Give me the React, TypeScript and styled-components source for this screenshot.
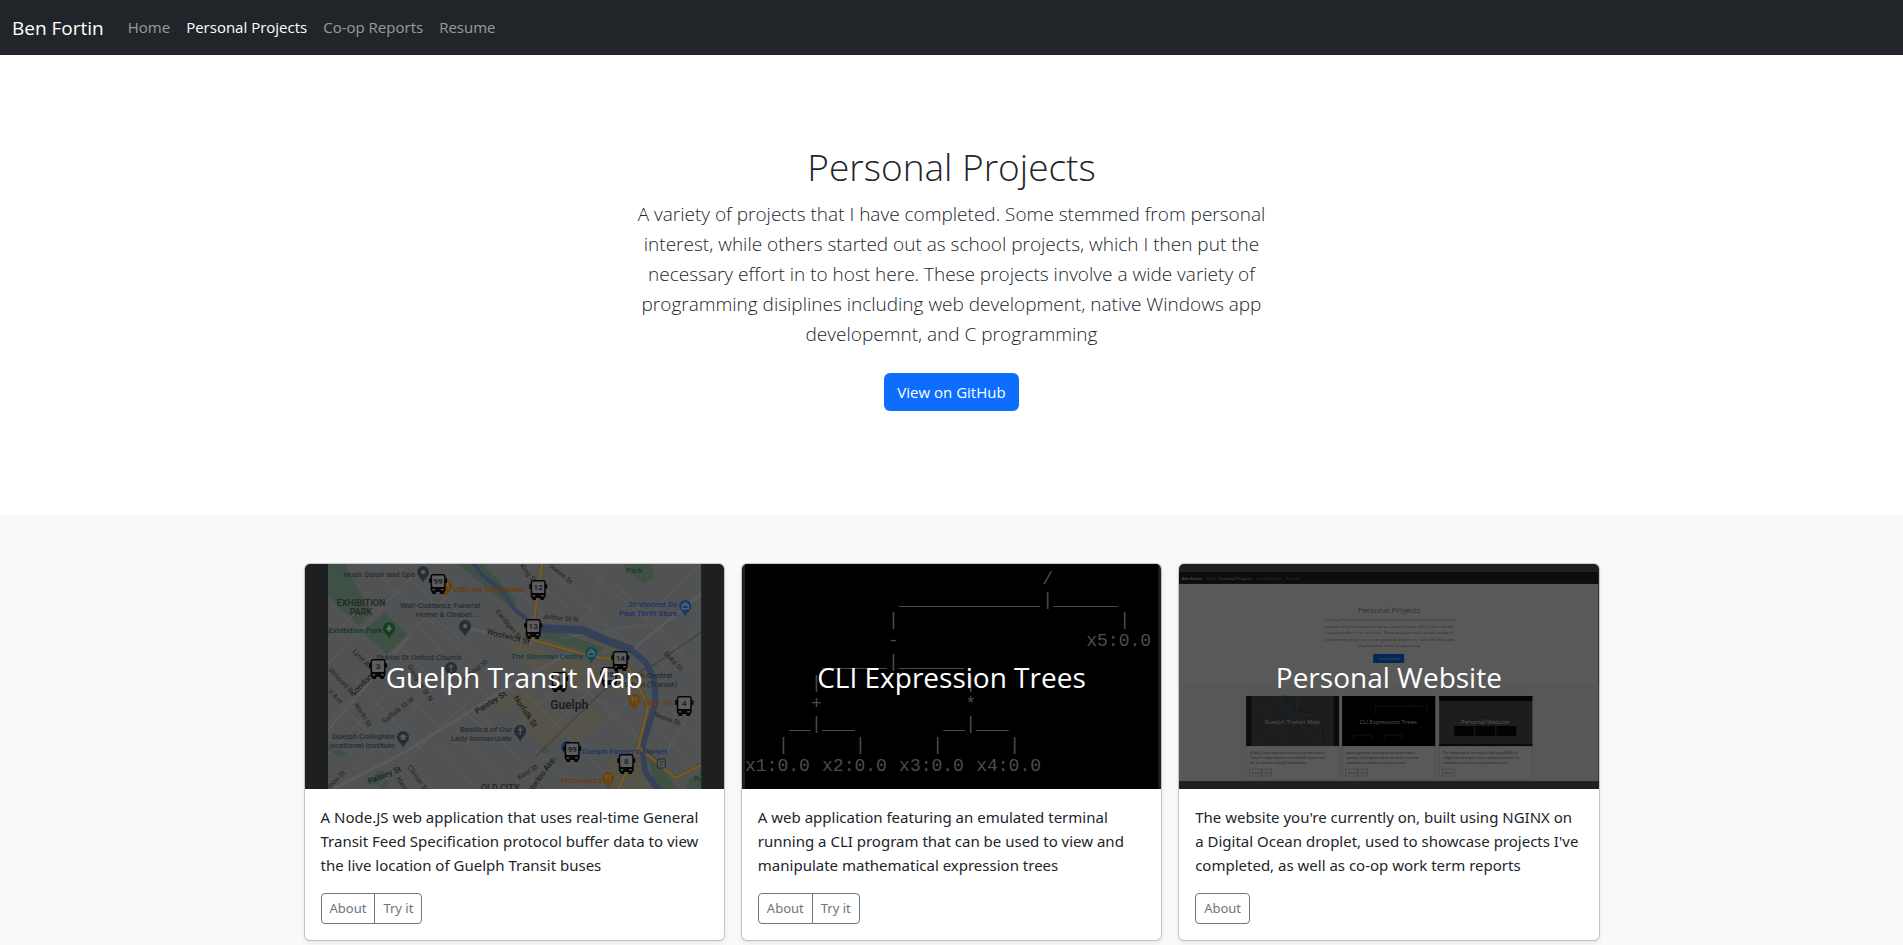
import React from "react";
import styled, { createGlobalStyle } from "styled-components";

const sans = `"Open Sans", "Noto Sans", "Liberation Sans", sans-serif`;

const GlobalStyle = createGlobalStyle`
  *, *::before, *::after { box-sizing: border-box; }
  body {
    margin: 0;
    background: #fff;
    color: #212529;
    font-family: ${sans};
    font-size: 15px;
    line-height: 24px;
  }
`;

const Navbar = styled.nav`
  display: flex;
  flex-wrap: wrap;
  align-items: center;
  padding: 8px 12px;
  background: #212529;
`;

const Brand = styled.a`
  margin-right: 16px;
  color: #fff;
  font-size: 19px;
  line-height: 30px;
  text-decoration: none;
`;

const NavList = styled.ul`
  display: flex;
  flex-wrap: wrap;
  margin: 0;
  padding: 0;
  list-style: none;
`;

const NavLink = styled.a<{ $active?: boolean }>`
  display: block;
  padding: 8px;
  line-height: 23px;
  color: ${(p) => (p.$active ? "#fff" : "rgba(255, 255, 255, 0.55)")};
  text-decoration: none;
`;

const Hero = styled.section`
  padding: 88px 12px 96px;
  text-align: center;
`;

const HeroInner = styled.div`
  max-width: 636px;
  margin: 0 auto;
`;

const HeroTitle = styled.h1`
  margin: 0 0 8px;
  font-size: 37px;
  font-weight: 300;
  line-height: 48px;
`;

const Lead = styled.p`
  margin: 0 0 24px;
  font-size: 19px;
  font-weight: 300;
  line-height: 30px;
`;

const PrimaryLink = styled.a`
  display: inline-block;
  margin-bottom: 8px;
  padding: 7px 13px;
  border-radius: 6px;
  background: #0d6efd;
  color: #fff;
  vertical-align: top;
  text-decoration: none;
`;

const Album = styled.section`
  padding: 48px 0;
  background: #f8f9fa;
`;

const CardGrid = styled.div`
  display: grid;
  grid-template-columns: repeat(3, minmax(0, 1fr));
  gap: 16px;
  max-width: 1320px;
  margin: 0 auto;
  padding: 0 12px;

  @media (max-width: 767px) {
    grid-template-columns: minmax(0, 1fr);
  }
`;

const Card = styled.article`
  display: flex;
  flex-direction: column;
  overflow: hidden;
  border: 1px solid rgba(0, 0, 0, 0.175);
  border-radius: 6px;
  background: #fff;
  background-clip: padding-box;
  box-shadow: 0 2px 4px rgba(0, 0, 0, 0.075);
`;

const Cover = styled.div`
  display: grid;
  place-items: center;
  height: 225px;
  background: #1d1f21;

  > * {
    grid-area: 1 / 1;
  }
`;

const CoverArt = styled.svg`
  display: block;
  width: 100%;
  height: 225px;
`;

const CoverTitle = styled.h2`
  z-index: 1;
  margin: 0;
  color: #fff;
  font-size: 28px;
  font-weight: 400;
  line-height: 36px;
`;

const CardBody = styled.div`
  padding: 16px;
`;

const CardText = styled.p`
  margin: 0 0 16px;
  font-family: "Noto Sans", ${sans};
`;

const ButtonGroup = styled.div`
  display: inline-flex;
  vertical-align: top;
`;

const OutlineButton = styled.button`
  padding: 4px 8px;
  border: 1px solid #6c757d;
  background: transparent;
  color: #6c757d;
  font-family: "Noto Sans", ${sans};
  font-size: 13px;
  line-height: 21px;
  cursor: pointer;

  &:first-child {
    border-radius: 4px 0 0 4px;
  }
  &:last-child {
    border-radius: 0 4px 4px 0;
  }
  &:only-child {
    border-radius: 4px;
  }
  & + & {
    margin-left: -1px;
  }
`;

/* ---------- Guelph Transit Map cover ---------- */

const Bus = ({ x, y, n }: { x: number; y: number; n: string }) => (
  <g transform={`translate(${x} ${y})`}>
    <rect x="-9" y="-5" width="2" height="5" rx="1" fill="#060606" />
    <rect x="7" y="-5" width="2" height="5" rx="1" fill="#060606" />
    <rect x="-6" y="7" width="4" height="4" rx="1" fill="#060606" />
    <rect x="2" y="7" width="4" height="4" rx="1" fill="#060606" />
    <rect x="-7.5" y="-9" width="15" height="18" rx="2.5" fill="#060606" />
    <rect x="-6" y="-7.5" width="12" height="11.5" rx="1" fill="#5c5d5e" />
    <rect x="-5.5" y="6" width="2.5" height="1.5" fill="#545556" />
    <rect x="3" y="6" width="2.5" height="1.5" fill="#545556" />
    <text x="0" y="1" fontSize="8" fontWeight="600" textAnchor="middle" fill="#1a1a1a">
      {n}
    </text>
  </g>
);

const Pin = ({ x, y, fill, kind }: { x: number; y: number; fill: string; kind: string }) => (
  <g transform={`translate(${x} ${y})`}>
    <path d="M0 11C-1 6-6 5-6 0A6 6 0 0 1 6 0C6 5 1 6 0 11Z" fill={fill} />
    {kind === "dot" && <circle r="2.2" fill="#585a5c" />}
    {kind === "cross" && <path d="M0-4V4M-2.5-1.5H2.5" stroke="#5a5c5e" strokeWidth="1.3" />}
    {kind === "tree" && <path d="M0-4L3 2H.7V4H-.7V2H-3Z" fill="#5c6a5e" />}
    {kind === "fork" && (
      <path d="M-1.8-3.5V3.5M-3-3.5V-1H-.6V-3.5M2-3.5V3.5M2-3.5C.6-2 .8 0 2 .5" stroke="#6b5a45" strokeWidth="1" fill="none" />
    )}
    {kind === "shop" && (
      <path d="M-3-.8H3V3H-3ZM-1.6-.8C-1.6-4 1.6-4 1.6-.8" fill="none" stroke="#5d6a78" strokeWidth="1.2" />
    )}
    {kind === "school" && <path d="M-4-.8L0-2.8 4-.8 0 1.2ZM-2.4.8V2.6H2.4V.8" fill="#5a5c5e" />}
  </g>
);

type Label = [text: string, x: number, y: number, fill: string, anchor?: "start" | "middle" | "end", size?: number, rotate?: number, weight?: number];

const slate = "#272d31";
const street = "#2a2b2c";
const orange = "#6e3910";
const blue = "#1a3566";

const mapLabels: Label[] = [
  ["Hush Salon and Spa", 110, 13, slate, "end"],
  ["EXHIBITION", 56, 42, "#24292a", "middle", 9, 0, 600],
  ["PARK", 56, 51, "#24292a", "middle", 9, 0, 600],
  ["Wall-Custance Funeral", 175, 44, slate, "end"],
  ["Home & Chapel:...", 175, 53, slate, "end"],
  ["Exhibition Park", 77, 69, "#10371f", "end"],
  ["Dublin St United Church", 114, 96, slate, "middle"],
  ["Guelph Collegiate", 90, 175, slate, "end"],
  ["ocational Institute", 90, 184, slate, "end"],
  ["With the Grain Baker", 148, 28, orange, "start"],
  ["Basilica of Our", 207, 168, slate, "end"],
  ["Lady Immaculate", 207, 177, slate, "end"],
  ["OLD CITY", 195, 227, "#242628", "middle", 9, 0, 600],
  ["Park", 329, 9, "#1d3a27", "middle"],
  ["St-Vincent De", 372, 43, blue, "end"],
  ["Paul Thrift Store", 372, 52, blue, "end"],
  ["The Sleeman Centre", 278, 95, "#0d3e43", "end"],
  ["Guelph Central", 367, 114, slate, "end"],
  ["Station (Transit)", 372, 123, slate, "end"],
  ["Guelph", 264, 145, "#1b1c1d", "middle", 12, 0, 600],
  ["Sugo on Surrey", 337, 141, orange, "start"],
  ["Guelph Farmers' Market", 362, 190, blue, "end"],
  ["McDonald's", 297, 219, orange, "end"],
  ["Lyon Ave", 47, 88, street, "start", 7, 45],
  ["London Rd", 49, 132, "#1e1f20", "start", 8, -45],
  ["stmount Rd", 23, 106, street, "start", 7, 47],
  ["n Ave", 23, 128, street, "start", 7, 45],
  ["North St", 49, 141, street, "start", 7, 58],
  ["Suffolk St W", 79, 160, street, "start", 7, -38],
  ["Glasgow St N", 102, 102, street, "start", 7, 58],
  ["Cardigan St", 190, 48, street, "start", 7, 50],
  ["Woolwich St", 181, 70, "#1e1f20", "start", 8, 14],
  ["Cardinal St", 156, 120, street, "start", 7, -38],
  ["Paisley St", 172, 150, "#1e1f20", "start", 8, -32],
  ["Paisley St", 64, 220, "#1e1f20", "start", 8, -22],
  ["Clinton St", 102, 203, street, "start", 7, 55],
  ["Harris St", 91, 215, street, "start", 7, 55],
  ["mon St", 25, 225, street, "start", 7, -45],
  ["Norfolk St", 208, 134, "#1e1f20", "start", 8, 56],
  ["Waterloo Ave", 222, 235, "#1e1f20", "start", 8, -54],
  ["Kent St", 214, 216, street, "start", 7, -32],
  ["King St", 214, 2, street, "start", 7, 50],
  ["Queen St", 243, 2, street, "start", 7, 40],
  ["Arthur St N", 238, 55, street, "start", 7, 5],
  ["Duke St", 358, 90, street, "start", 7, 46],
  ["Neeve St", 348, 152, street, "start", 7, 20],
  ["Ro", 389, 217, "#1d3a27", "start"],
];

const minorStreets = [
  "M23 160L103 71L160 14",
  "M28 130L90 200M45 110L120 190M62 92L150 180M92 80L178 165M112 62L190 140M140 62L210 130",
  "M23 190L120 92M50 205L162 90M70 225L190 112",
  "M23 60L60 100M23 100L90 30L120 0M120 0L162 64L210 76",
  "M62 0L150 80M90 0L130 40M23 75L50 50",
  "M100 200L130 225M130 180L172 225M150 165L205 225M175 150L230 215",
  "M210 119L290 200L320 225M215 160L260 115L300 140L350 190",
  "M262 105L310 155M250 160L300 110M285 175L330 130M230 185L275 225",
  "M240 0L300 60L340 95M300 0L280 60M275 0L340 55L396 0M340 55L396 110M310 20L380 90",
  "M396 60L350 110M350 95L396 150M360 140L396 180M350 160L396 215M396 130L360 190",
  "M210 0L265 45M210 25L250 60M255 75L340 60M300 60V90",
];

const TransitMapArt = () => (
  <CoverArt viewBox="0 0 419 225" preserveAspectRatio="xMidYMid slice" aria-hidden="true" fontFamily="Roboto, sans-serif">
    <defs>
      <clipPath id="mapClip">
        <rect x="23" y="0" width="373" height="225" />
      </clipPath>
    </defs>
    <g clipPath="url(#mapClip)">
      <rect x="23" y="0" width="373" height="225" fill="#515253" />
      <g fill="#565349">
        <path d="M196 68L214 64L228 84L262 94L300 102L325 110L322 130L290 122L268 128L240 110L212 96Z" />
        <path d="M204 130L224 124L244 148L272 158L262 172L238 182L218 160Z" />
        <path d="M190 132L206 128L212 140L194 150Z" />
        <path d="M262 158L284 140L300 156L268 180Z" />
        <path d="M302 196L330 190L348 225H312Z" />
        <path d="M286 70L312 80L316 92L292 88Z" />
      </g>
      <g fill="#3f5044">
        <path d="M23 0H40L48 16L66 48L54 62L23 32Z" />
        <path d="M57 68L80 49L103 71L82 90Z" />
        <path d="M154 0H178L210 34V48L165 10Z" />
        <path d="M318 0H345L349 14L339 20L322 8Z" />
        <path d="M68 212L74 206L84 219L78 225L64 218Z" />
        <path d="M232 60L270 74L300 84L290 90L236 74Z" />
        <path d="M340 180L352 196L372 225H350Z" />
        <path d="M23 180L42 190L36 193L23 186Z" />
        <path d="M384 215L396 206V225H380Z" />
        <path d="M238 200L250 192L252 198L240 208Z" />
        <path d="M235 186L240 181L244 187L239 190Z" />
      </g>
      <g fill="none" stroke="#5a5b5d">
        {minorStreets.map((d) => (
          <path key={d} d={d} />
        ))}
        <path d="M28 225L100 188L210 119L262 90" strokeWidth="3" />
        <path d="M23 166L103 74" strokeWidth="2.5" />
        <path d="M162 64L227 80M396 30L340 75L300 110" strokeWidth="3" />
      </g>
      <path d="M230 193L300 125L350 100L396 68" fill="none" stroke="#3d4040" strokeWidth="1" />
      <g fill="none" stroke="#344158" strokeLinejoin="round">
        <path d="M167-2L178 12L196 26L210 46L233 64" strokeWidth="4" />
        <path d="M232 64L277 66L300 76L327 86" strokeWidth="8" />
        <path d="M325 85L340 98L349 115L350 140L343 163L337 183L340 208L354 227" strokeWidth="6" />
      </g>
      <g fill="none" strokeLinejoin="round">
        <g stroke="#5a4a2a" strokeWidth="4">
          <path d="M237 0L230 46L227 76L290 93L320 97L343 142L333 183L313 225" />
          <path d="M333 183L370 214L396 201" />
        </g>
        <g stroke="#6e5b30" strokeWidth="2.5">
          <path d="M237 0L230 46L227 76L290 93L320 97L343 142L333 183L313 225" />
          <path d="M333 183L370 214L396 201" />
        </g>
      </g>
      <rect x="352" y="195" width="8" height="9" rx="2" fill="#555" stroke="#292929" />
      <text x="356" y="202" fontSize="7" textAnchor="middle" fill="#222">
        7
      </text>
      {mapLabels.map(([text, x, y, fill, anchor, size = 8, rotate = 0, weight = 500], i) => (
        <text
          key={i}
          x={x}
          y={y}
          fill={fill}
          fontSize={size}
          fontWeight={weight}
          textAnchor={anchor}
          transform={rotate ? `rotate(${rotate} ${x} ${y})` : undefined}
        >
          {text}
        </text>
      ))}
      <Pin x={118} y={8} fill="#262e33" kind="dot" />
      <Pin x={141} y={22} fill="#6b4208" kind="fork" />
      <Pin x={160} y={62} fill="#262e33" kind="dot" />
      <Pin x={84} y={64} fill="#12401f" kind="tree" />
      <Pin x={146} y={104} fill="#262e33" kind="cross" />
      <Pin x={98} y={173} fill="#262e33" kind="school" />
      <Pin x={380} y={42} fill="#1b3768" kind="shop" />
      <Pin x={286} y={89} fill="#0e4a50" kind="shop" />
      <Pin x={329} y={136} fill="#6b4208" kind="fork" />
      <Pin x={215} y={167} fill="#262e33" kind="cross" />
      <Pin x={303} y={214} fill="#6b4208" kind="fork" />
      <Pin x={262} y={183} fill="#1b3768" kind="shop" />
      <Bus x={133} y={19} n="99" />
      <Bus x={233} y={25} n="12" />
      <Bus x={228} y={64} n="13" />
      <Bus x={73} y={104} n="3" />
      <Bus x={304} y={112} n="20" />
      <Bus x={315} y={96} n="14" />
      <Bus x={254} y={117} n="1" />
      <Bus x={379} y={141} n="4" />
      <Bus x={267} y={187} n="99" />
      <Bus x={321} y={199} n="8" />
    </g>
  </CoverArt>
);

/* ---------- CLI Expression Trees cover ---------- */

type Token = [row: number, col: number, text: string];

const treeTokens: Token[] = [
  [0, 27, "/"],
  [1, 14, "_____________"],
  [1, 27, "|"],
  [1, 28, "______"],
  [2, 13, "|"],
  [2, 34, "|"],
  [3, 13, "-"],
  [3, 31, "x5:0.0"],
  [4, 7, "______"],
  [4, 13, "|"],
  [4, 14, "______"],
  [5, 6, "|"],
  [5, 20, "|"],
  [6, 6, "+"],
  [6, 20, "*"],
  [7, 4, "__"],
  [7, 6, "|"],
  [7, 7, "___"],
  [7, 18, "__"],
  [7, 20, "|"],
  [7, 21, "___"],
  [8, 3, "|"],
  [8, 10, "|"],
  [8, 17, "|"],
  [8, 24, "|"],
  [9, 0, "x1:0.0"],
  [9, 7, "x2:0.0"],
  [9, 14, "x3:0.0"],
  [9, 21, "x4:0.0"],
];

const ExpressionTreeArt = () => (
  <CoverArt viewBox="0 0 419 225" preserveAspectRatio="xMidYMid slice" aria-hidden="true">
    <rect x="3" y="0" width="413" height="225" fill="#000" />
    <g fill="#4c4c4c" fontFamily='"Liberation Mono", monospace' fontSize="18">
      {treeTokens.map(([row, col, text]) => (
        <text key={`${row}-${col}`} x={3 + col * 11} y={20 + row * 20.75}>
          {text}
        </text>
      ))}
    </g>
  </CoverArt>
);

/* ---------- Personal Website cover ---------- */

const leadLines = [
  "A variety of projects that I have completed. Some stemmed from personal",
  "interest, while others started out as school projects, which I then put the",
  "necessary effort in to host here. These projects involve a wide variety of",
  "programming disiplines including web development, native Windows app",
  "developemnt, and C programming",
];

const miniCards = [
  {
    x: 67,
    title: "Guelph Transit Map",
    fill: "#1c1d1e",
    lines: ["A Node.JS web application that uses real-time General", "Transit Feed Specification protocol buffer data to view", "the live location of Guelph Transit buses"],
    buttons: ["About", "Try it"],
  },
  {
    x: 163,
    title: "CLI Expression Trees",
    fill: "#000",
    lines: ["A web application featuring an emulated terminal", "running a CLI program that can be used to view and", "manipulate mathematical expression trees"],
    buttons: ["About", "Try it"],
  },
  {
    x: 260,
    title: "Personal Website",
    fill: "#1d1d1d",
    lines: ["The website you're currently on, built using NGINX on", "a Digital Ocean droplet, used to showcase projects I've", "completed, as well as co-op work term reports"],
    buttons: ["About"],
  },
];

const WebsiteArt = () => (
  <CoverArt viewBox="0 0 419 225" preserveAspectRatio="xMidYMid slice" aria-hidden="true" fontFamily={sans}>
    <rect x="0" y="8" width="419" height="209" fill="#595959" />
    <rect x="0" y="8" width="419" height="12" fill="#0c0d0e" />
    <g fontSize="4" fill="#343536">
      <text x="3" y="16" fill="#595959" fontWeight="600">Ben Fortin</text>
      <text x="27" y="16">Home</text>
      <text x="40" y="16" fill="#595959">Personal Projects</text>
      <text x="77" y="16">Co-op Reports</text>
      <text x="107" y="16">Resume</text>
    </g>
    <g textAnchor="middle">
      <text x="210" y="49" fontSize="8" fontWeight="300" fill="#161718">
        Personal Projects
      </text>
      {leadLines.map((line, i) => (
        <text key={line} x="210" y={57 + i * 6.6} fontSize="4" fontWeight="300" fill="#1c1d1e">
          {line}
        </text>
      ))}
      <rect x="194" y="90" width="31" height="9" rx="1" fill="#052758" />
      <text x="210" y="96" fontSize="3" fill="#595959">
        View on GitHub
      </text>
    </g>
    <rect x="0" y="121" width="419" height="96" fill="#565757" />
    {miniCards.map((card) => (
      <g key={card.title}>
        <rect x={card.x} y="132" width="93" height="84" fill="#595959" stroke="#4b4b4b" strokeWidth="0.5" />
        <rect x={card.x} y="132" width="93" height="50" fill={card.fill} />
        {card.fill === "#000" && (
          <path
            d={`M${card.x + 33} 150V142H${card.x + 85}V147M${card.x + 68} 137V142M${card.x + 12} 176V171H${card.x + 30}V176M${card.x + 42} 176V171H${card.x + 60}V176`}
            fill="none"
            stroke="#1d1d1d"
            strokeWidth="0.6"
          />
        )}
        {card.x === 67 && (
          <g fill="none">
            <path d="M70 132V182M157 132V182" stroke="#0a0b0c" strokeWidth="5" />
            <path d="M104 132L118 146L135 150L144 160V182" stroke="#141b26" strokeWidth="2" />
            <path d="M119 132L117 149L138 153L142 168L137 182" stroke="#2a2414" />
            <path d="M78 178L120 150M82 140L108 176M96 132L132 172" stroke="#222324" />
          </g>
        )}
        {card.x === 260 && (
          <g>
            <rect x="260" y="132" width="93" height="5" fill="#050505" />
            <rect x="303" y="152" width="7" height="2" fill="#051a3c" />
            <path d="M275 162h20v10h-20zM296 162h20v10h-20zM317 162h20v10h-20z" fill="#030303" />
            <rect x="260" y="180" width="93" height="2" fill="#0a0a0b" />
          </g>
        )}
        <text x={card.x + 46} y="160" fontSize="6" fill="#595959" textAnchor="middle">
          {card.title}
        </text>
        <g fontSize="3" fill="#1c1d1e">
          {card.lines.map((line, i) => (
            <text key={line} x={card.x + 4} y={189.5 + i * 5.3}>
              {line}
            </text>
          ))}
          {card.buttons.map((label, i) => (
            <g key={label}>
              <rect x={card.x + 3.5 + i * 12} y="205" width={i ? 10 : 12} height="7" fill="none" stroke="#3a3b3c" strokeWidth="0.5" />
              <text x={card.x + 5.5 + i * 12} y="209.5" fill="#333">
                {label}
              </text>
            </g>
          ))}
        </g>
      </g>
    ))}
  </CoverArt>
);

/* ---------- Page ---------- */

const links = ["Home", "Personal Projects", "Co-op Reports", "Resume"];

const projects = [
  {
    title: "Guelph Transit Map",
    Art: TransitMapArt,
    text: "A Node.JS web application that uses real-time General Transit Feed Specification protocol buffer data to view the live location of Guelph Transit buses",
    actions: ["About", "Try it"],
  },
  {
    title: "CLI Expression Trees",
    Art: ExpressionTreeArt,
    text: "A web application featuring an emulated terminal running a CLI program that can be used to view and manipulate mathematical expression trees",
    actions: ["About", "Try it"],
  },
  {
    title: "Personal Website",
    Art: WebsiteArt,
    text: "The website you're currently on, built using NGINX on a Digital Ocean droplet, used to showcase projects I've completed, as well as co-op work term reports",
    actions: ["About"],
  },
];

export default function App() {
  return (
    <>
      <GlobalStyle />
      <header>
        <Navbar>
          <Brand href="#">Ben Fortin</Brand>
          <NavList>
            {links.map((label) => (
              <li key={label}>
                <NavLink
                  href="#"
                  $active={label === "Personal Projects"}
                  aria-current={label === "Personal Projects" ? "page" : undefined}
                >
                  {label}
                </NavLink>
              </li>
            ))}
          </NavList>
        </Navbar>
      </header>
      <main>
        <Hero>
          <HeroInner>
            <HeroTitle>Personal Projects</HeroTitle>
            <Lead>{leadLines.join(" ")}</Lead>
            <PrimaryLink href="#">View on GitHub</PrimaryLink>
          </HeroInner>
        </Hero>
        <Album>
          <CardGrid>
            {projects.map(({ title, Art, text, actions }) => (
              <Card key={title}>
                <Cover>
                  <Art />
                  <CoverTitle>{title}</CoverTitle>
                </Cover>
                <CardBody>
                  <CardText>{text}</CardText>
                  <ButtonGroup>
                    {actions.map((action) => (
                      <OutlineButton key={action} type="button">
                        {action}
                      </OutlineButton>
                    ))}
                  </ButtonGroup>
                </CardBody>
              </Card>
            ))}
          </CardGrid>
        </Album>
      </main>
    </>
  );
}
